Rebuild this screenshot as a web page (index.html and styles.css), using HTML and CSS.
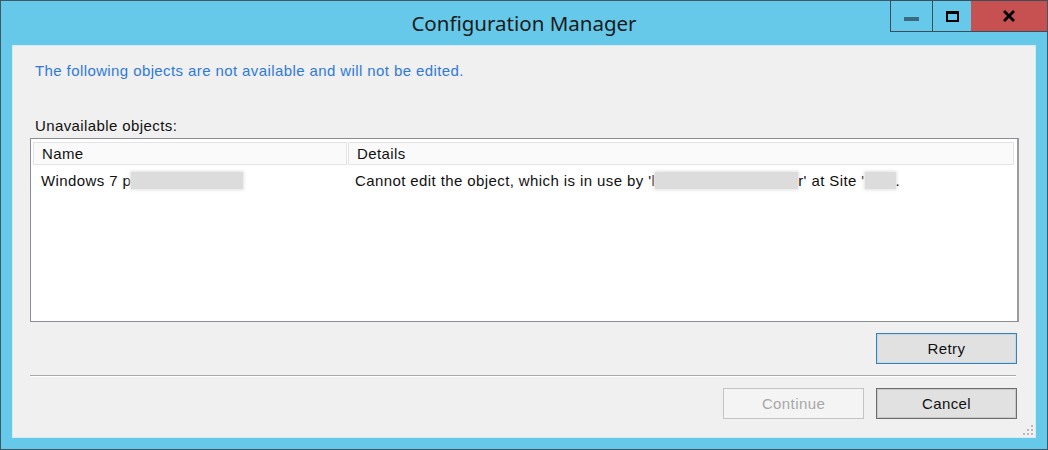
FILE: index.html
```html
<!DOCTYPE html>
<html>
<head>
<meta charset="utf-8">
<link rel="stylesheet" href="styles.css">
</head>
<body>
<div class="window">
  <div class="titlebar">
    <div class="title">Configuration Manager</div>
    <div class="controls">
      <div class="ctl min"><span class="min-bar"></span></div>
      <div class="ctl max"><span class="max-box"></span></div>
      <div class="ctl close">
        <svg width="14" height="12" viewBox="0 0 14 12"><path d="M2 1 L12 11 M12 1 L2 11" stroke="#000" stroke-width="2.8" fill="none"/></svg>
      </div>
    </div>
  </div>
  <div class="client">
    <p class="notice">The following objects are not available and will not be edited.</p>
    <p class="label">Unavailable objects:</p>
    <div class="listbox">
      <div class="header">
        <div class="hcell name-col">Name</div>
        <div class="hcell details-col">Details</div>
      </div>
      <div class="row">
        <div class="cell name-col">Windows 7 p<span class="blur b1"></span></div>
        <div class="cell details-col">Cannot edit the object, which is in use by 'l<span class="blur b2"></span>r' at Site '<span class="blur b3"></span>.</div>
      </div>
    </div>
    <div class="retry-row">
      <button class="btn default">Retry</button>
    </div>
    <div class="separator"></div>
    <div class="bottom-row">
      <button class="btn disabled">Continue</button>
      <button class="btn normal">Cancel</button>
    </div>
    <svg class="grip" width="12" height="12" viewBox="0 0 12 12">
      <g fill="#b8b8b8">
        <rect x="9" y="1" width="2" height="2"/>
        <rect x="5" y="5" width="2" height="2"/><rect x="9" y="5" width="2" height="2"/>
        <rect x="1" y="9" width="2" height="2"/><rect x="5" y="9" width="2" height="2"/><rect x="9" y="9" width="2" height="2"/>
      </g>
    </svg>
  </div>
</div>
</body>
</html>
```
FILE: styles.css
```css
html, body {
  margin: 0;
  padding: 0;
  background: #66c9e9;
}
.window {
  position: relative;
  box-sizing: border-box;
  width: 1048px;
  height: 450px;
  border: 1px solid #3d5866;
  background: #66c9e9;
  padding: 0 11px 11px 11px;
  display: flex;
  flex-direction: column;
  font-family: "Liberation Sans", Arial, sans-serif;
}
.titlebar {
  height: 44px;
  display: flex;
  align-items: center;
  justify-content: center;
}
.title {
  font-family: "Noto Sans", "Open Sans", sans-serif;
  font-size: 20.5px;
  color: #1a1a1a;
  margin-top: -1px;
}
.controls {
  position: absolute;
  top: -1px;
  right: 0;
  display: flex;
  height: 32px;
}
.ctl {
  box-sizing: border-box;
  height: 32px;
  display: flex;
  align-items: center;
  justify-content: center;
}
.min {
  width: 42px;
  border: 1px solid #3b4e59;
  border-right: none;
}
.max {
  width: 40px;
  border: 1px solid #3b4e59;
}
.close {
  width: 76px;
  background: #c75050;
  border-top: 1px solid #3b4e59;
  border-bottom: 1px solid #3b4e59;
  margin-left: -1px;
}
.min-bar {
  display: block;
  width: 15px;
  height: 4px;
  background: #3a6a80;
  margin-top: 6px;
}
.max-box {
  display: block;
  box-sizing: border-box;
  width: 13px;
  height: 11px;
  border: 2px solid #000;
  border-top-width: 3px;
}
.client {
  position: relative;
  flex: 1;
  background: #f0f0f0;
  border: 1px solid #d6ecf5;
  box-sizing: border-box;
  padding: 0 16px 0 17px;
  display: flex;
  flex-direction: column;
  font-size: 15px;
  letter-spacing: 0.4px;
}
.notice {
  margin: 16px 0 0 5px;
  line-height: 18px;
  color: #2f7ad8;
}
.label {
  margin: 37px 0 0 5px;
  line-height: 18px;
  color: #111;
}
.listbox {
  margin-top: 3px;
  height: 184px;
  box-sizing: border-box;
  background: #fff;
  border: 1px solid #8a8d92;
  border-right: 2px solid #9a9ca0;
  padding: 3px 3px 0 2px;
  display: flex;
  flex-direction: column;
}
.header {
  display: flex;
  height: 23px;
}
.hcell {
  box-sizing: border-box;
  background: #fafafa;
  border: 1px solid #e3e3e3;
  line-height: 21px;
  padding-left: 8px;
  color: #111;
}
.hcell.name-col {
  width: 314px;
}
.hcell.details-col {
  flex: 1;
  margin-left: 1px;
}
.row {
  display: flex;
  height: 24px;
  padding-top: 3px;
  align-items: center;
}
.cell {
  color: #111;
  white-space: nowrap;
  display: flex;
  align-items: center;
}
.cell.name-col {
  width: 315px;
  padding-left: 8px;
  box-sizing: border-box;
}
.cell.details-col {
  padding-left: 7px;
}
.blur {
  display: inline-block;
  height: 17px;
  background: #dcdcdc;
  box-shadow: 0 0 3px 1px #e2e2e2;
}
.b1 { width: 112px; }
.b2 { width: 143px; }
.b3 { width: 31px; }
.retry-row {
  display: flex;
  justify-content: flex-end;
  margin-top: 11px;
  padding-right: 2px;
}
.btn {
  box-sizing: border-box;
  width: 141px;
  height: 31px;
  font-family: "Liberation Sans", Arial, sans-serif;
  font-size: 15px;
  letter-spacing: 0.4px;
  padding: 0;
  margin: 0;
}
.btn.default {
  background: #e1e1e1;
  border: 1px solid #3c7fb1;
  box-shadow: inset 0 0 0 1px #bfd9ef;
  color: #111;
}
.btn.normal {
  background: #e1e1e1;
  border: 1px solid #6d6d6d;
  box-shadow: inset 0 0 0 1px #c9c9c9;
  color: #111;
}
.btn.disabled {
  background: #f4f4f4;
  border: 1px solid #c4c4c4;
  color: #a8a8a8;
}
.separator {
  margin-top: 11px;
  height: 1px;
  background: #a9a9a9;
  border-bottom: 1px solid #fff;
  margin-right: 3px;
}
.bottom-row {
  display: flex;
  justify-content: flex-end;
  gap: 12px;
  margin-top: 11px;
  padding-right: 2px;
}
.grip {
  position: absolute;
  right: 1px;
  bottom: 1px;
}
```
